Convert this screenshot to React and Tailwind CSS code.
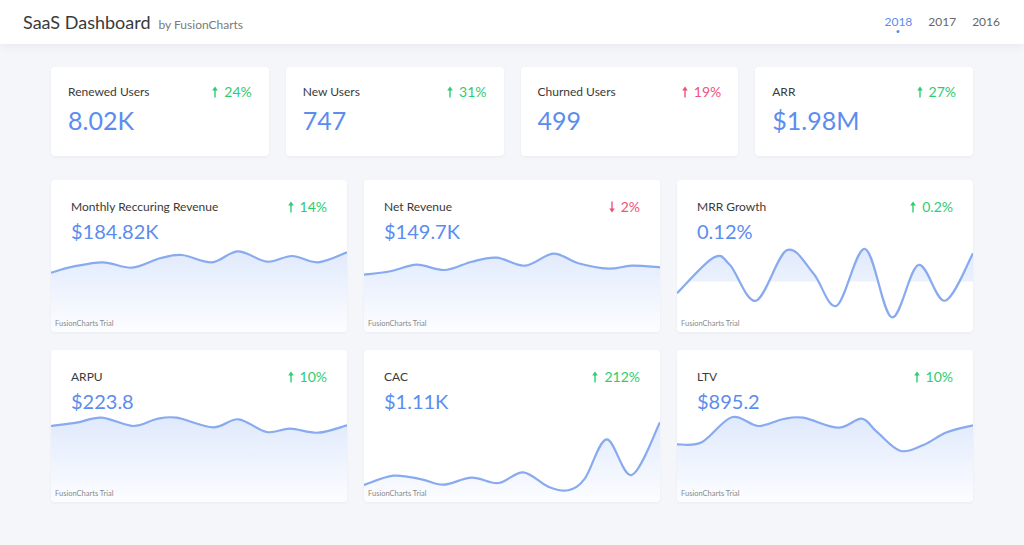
import React from 'react';

const FONT = { fontFamily: 'Lato, "Open Sans", sans-serif' };

const kpis = [
  { label: 'Renewed Users', value: '8.02K', change: '24%', up: true, good: true },
  { label: 'New Users', value: '747', change: '31%', up: true, good: true },
  { label: 'Churned Users', value: '499', change: '19%', up: true, good: false },
  { label: 'ARR', value: '$1.98M', change: '27%', up: true, good: true },
];

// points in chart-local coords (viewBox 296 x 90)
const charts = [
  {
    label: 'Monthly Reccuring Revenue', value: '$184.82K', change: '14%', up: true, good: true,
    pts: [[0, 30.7], [22, 24.7], [52, 20.3], [81, 25.7], [109, 16.3], [131, 13], [161, 20.3], [187, 9.3], [216, 19.7], [241, 14], [267, 20.3], [296, 10.3]],
  },
  {
    label: 'Net Revenue', value: '$149.7K', change: '2%', up: false, good: false,
    pts: [[0, 32.7], [27.7, 29], [52.7, 22.7], [81, 28], [107.7, 19.7], [132.7, 15.7], [161, 23.7], [189.3, 11.7], [214.3, 21.3], [244.3, 26.7], [267.7, 23.7], [296, 25.3]],
  },
  {
    label: 'MRR Growth', value: '0.12%', change: '0.2%', up: true, good: true, base: 39.7,
    pts: [[0, 51.3], [36.3, 15.7], [53, 23], [79, 58.7], [109.7, 8.3], [136.3, 31.3], [159.7, 63.7], [188, 7], [214.7, 75.3], [241.3, 23], [268, 58.7], [296, 11.3]],
  },
  {
    label: 'ARPU', value: '$223.8', change: '10%', up: true, good: true,
    pts: [[0, 14], [25.7, 10.7], [50.7, 5.7], [82.3, 14], [105.7, 7], [125.7, 5.7], [162.3, 15.3], [187.3, 7.3], [215.7, 20], [239, 16.7], [267.3, 20.7], [296, 13.3]],
  },
  {
    label: 'CAC', value: '$1.11K', change: '212%', up: true, good: true,
    pts: [[0, 73], [29.3, 63.7], [57.7, 67.3], [79.3, 72.7], [107.7, 65.7], [134.3, 71], [159.3, 60.3], [184.3, 74.7], [204.3, 78.3], [221, 66.3], [242.7, 27.3], [267.7, 63], [296, 10.3]],
  },
  {
    label: 'LTV', value: '$895.2', change: '10%', up: true, good: true,
    pts: [[0, 32.3], [24.7, 30.3], [54.7, 5.3], [81.3, 14], [106.3, 7], [126.3, 5.7], [161.3, 15.7], [184.7, 6.7], [199.7, 19.7], [223, 38.7], [246.3, 33], [269.7, 20.3], [296, 13.3]],
  },
];

// catmull-rom -> cubic bezier
const smooth = (pts) => {
  let d = `M${pts[0][0]} ${pts[0][1]}`;
  for (let i = 0; i < pts.length - 1; i++) {
    const p0 = pts[i - 1] || pts[i];
    const p1 = pts[i];
    const p2 = pts[i + 1];
    const p3 = pts[i + 2] || p2;
    const c1 = [p1[0] + (p2[0] - p0[0]) / 6, p1[1] + (p2[1] - p0[1]) / 6];
    const c2 = [p2[0] - (p3[0] - p1[0]) / 6, p2[1] - (p3[1] - p1[1]) / 6];
    d += ` C${c1[0].toFixed(1)} ${c1[1].toFixed(1)} ${c2[0].toFixed(1)} ${c2[1].toFixed(1)} ${p2[0]} ${p2[1]}`;
  }
  return d;
};

const Arrow = ({ up }) => (
  <svg width="8" height="12" viewBox="0 0 8 12" className={up ? '' : 'rotate-180'}>
    <path d="M4 11.5V3" stroke="currentColor" strokeWidth="1.4" />
    <path d="M1.2 4.6L4 0.6l2.8 4z" fill="currentColor" />
  </svg>
);

const Change = ({ change, up, good }) => (
  <div className={`flex items-center gap-[5px] text-[14px] ${good ? 'text-[#2ecc71]' : 'text-[#f0517b]'}`}>
    <Arrow up={up} />
    <span>{change}</span>
  </div>
);

const KpiCard = ({ label, value, change, up, good }) => (
  <div className="bg-white rounded-[4px] h-[89px] px-[17px] pt-[14px] shadow-[0_1px_3px_rgba(30,40,90,0.05)]">
    <div className="flex items-center justify-between">
      <span className="text-[12px] text-[#3a3a3a]">{label}</span>
      <Change change={change} up={up} good={good} />
    </div>
    <div className="text-[25px] leading-[30px] text-[#5b8def] mt-[3px]">{value}</div>
  </div>
);

const ChartCard = ({ label, value, change, up, good, pts, base }) => {
  const line = smooth(pts);
  const id = `g${label.replace(/\W/g, '')}`;
  const bottom = base ?? 90;
  return (
    <div className="relative bg-white rounded-[4px] h-[152px] overflow-hidden flex flex-col shadow-[0_1px_3px_rgba(30,40,90,0.05)]">
      <div className="h-[62px] px-[20px] pt-[16px]">
        <div className="flex items-center justify-between">
          <span className="text-[12px] text-[#3a3a3a]">{label}</span>
          <Change change={change} up={up} good={good} />
        </div>
        <div className="text-[20px] leading-[26px] text-[#5b8def] mt-[1px]">{value}</div>
      </div>
      <svg className="w-full h-[90px] block" viewBox="0 0 296 90" preserveAspectRatio="none">
        <defs>
          <linearGradient id={id} x1="0" y1="0" x2="0" y2="90" gradientUnits="userSpaceOnUse">
            <stop offset="0" stopColor="#5b8def" stopOpacity="0.2" />
            <stop offset="1" stopColor="#5b8def" stopOpacity="0.02" />
          </linearGradient>
          {base && (
            <clipPath id={`${id}c`}>
              <rect x="0" y="0" width="296" height={base} />
            </clipPath>
          )}
        </defs>
        <path
          d={`${line} L296 ${bottom} L0 ${bottom} Z`}
          fill={`url(#${id})`}
          clipPath={base ? `url(#${id}c)` : undefined}
        />
        <path d={line} fill="none" stroke="#88aaef" strokeWidth="2.2" />
      </svg>
      <span className="absolute left-[4px] bottom-[3px] text-[7.5px] text-[#8a8a8a]">FusionCharts Trial</span>
    </div>
  );
};

export default function App() {
  return (
    <div className="min-h-[545px] bg-[#f5f6fa]" style={FONT}>
      <header className="h-[44px] bg-white flex items-center justify-between pl-[23px] pr-[24px] shadow-[0_2px_10px_rgba(30,40,90,0.06)] relative">
        <div className="flex items-baseline gap-[8px]">
          <span className="text-[18px] text-[#3a3a3a]">SaaS Dashboard</span>
          <span className="text-[12px] text-[#7a7a7a]">by FusionCharts</span>
        </div>
        <nav className="flex items-center gap-[16px] text-[12px]">
          <div className="relative text-[#5b8def]">
            2018
            <span className="absolute left-1/2 -translate-x-1/2 top-[17px] w-[3px] h-[3px] rounded-full bg-[#5b8def]" />
          </div>
          <span className="text-[#666]">2017</span>
          <span className="text-[#666]">2016</span>
        </nav>
      </header>
      <main className="px-[51px] pt-[23px]">
        <div className="grid grid-cols-4 gap-[17px]">
          {kpis.map((k) => (
            <KpiCard key={k.label} {...k} />
          ))}
        </div>
        <div className="grid grid-cols-3 gap-x-[17px] gap-y-[18px] mt-[24px]">
          {charts.map((c) => (
            <ChartCard key={c.label} {...c} />
          ))}
        </div>
      </main>
    </div>
  );
}
